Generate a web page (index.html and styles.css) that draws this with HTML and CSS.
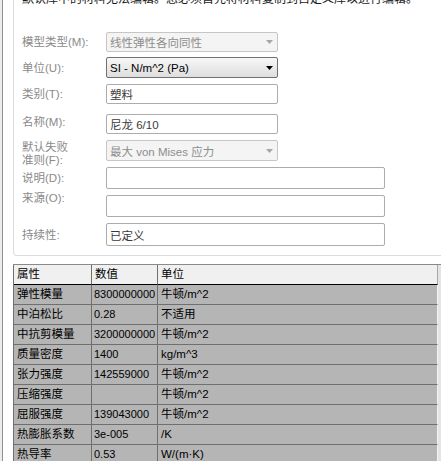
FILE: index.html
```html
<!DOCTYPE html>
<html lang="zh-CN">
<head>
<meta charset="utf-8">
<title>材料</title>
<link rel="stylesheet" href="styles.css">
</head>
<body>
<div class="window">
  <div class="group">
    <p class="notice">默认库中的材料无法编辑。您必须首先将材料复制到自定义库以进行编辑。</p>
    <div class="form">
      <div class="row r1">
        <span class="label">模型类型(M):</span>
        <div class="field combo disabled short"><span class="val">线性弹性各向同性</span><svg class="arrow" width="7" height="4" viewBox="0 0 7 4"><path d="M0 0H7L3.5 4Z" fill="#a6a6a6"/></svg></div>
      </div>
      <div class="row r2">
        <span class="label">单位(U):</span>
        <div class="field combo active short"><span class="val">SI - N/m^2 (Pa)</span><svg class="arrow" width="7" height="4" viewBox="0 0 7 4"><path d="M0 0H7L3.5 4Z" fill="#000"/></svg></div>
      </div>
      <div class="row r3">
        <span class="label">类别(T):</span>
        <div class="field text short"><span class="val">塑料</span></div>
      </div>
      <div class="row r4">
        <span class="label up2">名称(M):</span>
        <div class="field text short"><span class="val">尼龙 6/10</span></div>
      </div>
      <div class="row r5">
        <span class="label two">默认失败<br>准则(F):</span>
        <div class="field combo disabled short"><span class="val">最大 von Mises 应力</span><svg class="arrow" width="7" height="4" viewBox="0 0 7 4"><path d="M0 0H7L3.5 4Z" fill="#a6a6a6"/></svg></div>
      </div>
      <div class="row r6">
        <span class="label">说明(D):</span>
        <div class="field text long"></div>
      </div>
      <div class="row r7">
        <span class="label up8">来源(O):</span>
        <div class="field text long"></div>
      </div>
      <div class="row r8">
        <span class="label">持续性:</span>
        <div class="field text long"><span class="val">已定义</span></div>
      </div>
    </div>
  </div>

  <div class="table-wrap">
    <table class="props">
      <colgroup><col class="c1"><col class="c2"><col class="c3"></colgroup>
      <thead>
        <tr><th>属性</th><th>数值</th><th class="last">单位</th></tr>
      </thead>
      <tbody>
        <tr><td>弹性模量</td><td class="num">8300000000</td><td class="last">牛顿/m^2</td></tr>
        <tr><td>中泊松比</td><td class="num">0.28</td><td class="last">不适用</td></tr>
        <tr><td>中抗剪模量</td><td class="num">3200000000</td><td class="last">牛顿/m^2</td></tr>
        <tr><td>质量密度</td><td class="num">1400</td><td class="last">kg/m^3</td></tr>
        <tr><td>张力强度</td><td class="num">142559000</td><td class="last">牛顿/m^2</td></tr>
        <tr><td>压缩强度</td><td class="num"></td><td class="last">牛顿/m^2</td></tr>
        <tr><td>屈服强度</td><td class="num">139043000</td><td class="last">牛顿/m^2</td></tr>
        <tr><td>热膨胀系数</td><td class="num">3e-005</td><td class="last">/K</td></tr>
        <tr><td>热导率</td><td class="num">0.53</td><td class="last">W/(m·K)</td></tr>
      </tbody>
    </table>
    <div class="vscroll"></div>
  </div>
</div>
</body>
</html>
```

FILE: styles.css
```css
* { box-sizing: border-box; }
html, body { margin: 0; height: 100%; }
body {
  background: #ececec;
  font-family: "Liberation Sans", "Noto Sans CJK SC", sans-serif;
  font-size: 11.5px;
  color: #000;
  overflow: hidden;
}
.window {
  margin-left: 2px;
  border-left: 1px solid #8f8f8f;
  background: #fff;
  height: 461px;
  overflow: hidden;
  padding-left: 10px;
}
.group {
  margin-right: -10px;
  border-left: 1px solid #d6dee4;
  border-bottom: 1px solid #d6dee4;
  border-bottom-left-radius: 4px;
  padding: 0 0 9px 8px;
}
.notice {
  margin: -9px 0 0;
  line-height: 16px;
  font-size: 12px;
  color: #1a1a1a;
  white-space: nowrap;
}
.form {
  padding-top: 25px;
  display: flex;
  flex-direction: column;
}
.row { display: flex; align-items: center; }
.r1 { height: 20px; }
.r2 { height: 21px; margin-top: 5px; }
.r3 { height: 20px; margin-top: 6px; }
.r4 { height: 20px; margin-top: 10px; }
.r5 { height: 21px; margin-top: 6px; align-items: flex-start; }
.r6 { height: 22px; margin-top: 6px; }
.r7 { height: 22px; margin-top: 6px; }
.r8 { height: 23px; margin-top: 6px; }

.label {
  flex: none;
  width: 84px;
  color: #8a8a8a;
  line-height: 16px;
  white-space: nowrap;
}
.label.up2 { margin-top: -4px; }
.label.up8 { margin-top: -16px; }
.label.two { line-height: 13px; margin-top: 1px; }

.field {
  height: 100%;
  display: flex;
  align-items: center;
  padding-left: 3px;
  border-radius: 2px;
  white-space: nowrap;
}
.short { width: 172px; }
.long { width: 279px; }
.val { flex: 1; }
.text {
  border: 1px solid #acacac;
  background: #fff;
  color: #3a3a3a;
}
.combo { padding-right: 4px; }
.combo.disabled {
  border: 1px solid #c6c6c6;
  background: #f4f4f4;
  color: #8d8d8d;
}
.combo.active {
  border: 1px solid #707070;
  background: linear-gradient(#f7f7f7, #dedede);
  color: #000;
}
.arrow { flex: none; display: block; }

.table-wrap {
  margin-top: 8px;
  display: flex;
  border-top: 1px solid #8a8a8a;
  margin-right: -10px;
}
.props {
  border-collapse: separate;
  border-spacing: 0;
  table-layout: fixed;
  width: 425px;
  border-left: 1px solid #6f6f6f;
}
.c1 { width: 78px; }
.c2 { width: 66px; }
.c3 { width: 280px; }
.props th, .props td {
  padding: 0 0 0 3px;
  line-height: 19px;
  text-align: left;
  font-weight: normal;
  white-space: nowrap;
  overflow: hidden;
  border-right: 1px solid #6f6f6f;
  border-bottom: 1px solid #6f6f6f;
}
.props th {
  background: #f0f0f0;
  border-bottom-color: #000;
}
.props th.last { border-right-color: #a8a8a8; }
.props td { background: #b5b5b5; }
.props td.last { border-right: 1px solid #f4f4f4; }
.props td.num { font-size: 11px; padding-left: 2px; }
.vscroll {
  flex: 1;
  background: #e4e4e4;
}
```
